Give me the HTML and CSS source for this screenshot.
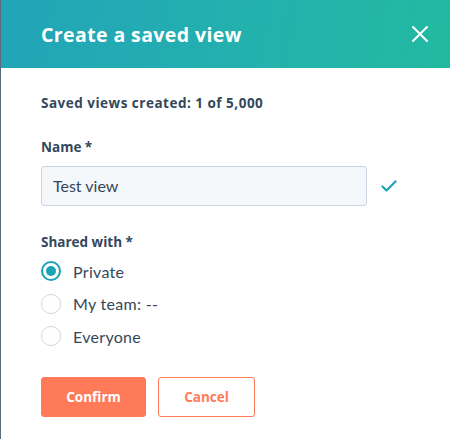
FILE: index.html
```html
<!DOCTYPE html>
<html>
<head>
<meta charset="utf-8">
<link rel="stylesheet" href="styles.css">
</head>
<body>
<div class="dialog">
  <header class="header">
    <h1 class="title">Create a saved view</h1>
    <button class="close" aria-label="Close">
      <svg width="16" height="16" viewBox="0 0 16 16"><path d="M1 1 L15 15 M15 1 L1 15" stroke="#fff" stroke-width="2" stroke-linecap="round" fill="none"/></svg>
    </button>
  </header>
  <div class="content">
    <p class="count">Saved views created: 1 of 5,000</p>
    <label class="label">Name *</label>
    <div class="input-row">
      <div class="input">Test view</div>
      <svg class="check" width="16" height="12" viewBox="0 0 16 12"><path d="M1.5 6.5 L5.5 10.5 L14.5 1.5" stroke="#1aa3b6" stroke-width="2.2" fill="none" stroke-linecap="round" stroke-linejoin="round"/></svg>
    </div>
    <label class="label shared">Shared with *</label>
    <div class="radios">
      <div class="radio-row"><span class="radio checked"></span><span class="radio-label">Private</span></div>
      <div class="radio-row"><span class="radio"></span><span class="radio-label">My team: --</span></div>
      <div class="radio-row"><span class="radio"></span><span class="radio-label">Everyone</span></div>
    </div>
    <div class="actions">
      <button class="btn primary">Confirm</button>
      <button class="btn secondary">Cancel</button>
    </div>
  </div>
</div>
</body>
</html>
```
FILE: styles.css
```css
html, body {
  margin: 0;
  padding: 0;
  background: #fff;
}
body {
  font-family: Lato, "Noto Sans", sans-serif;
  color: #33475b;
}
.dialog {
  width: 450px;
  height: 439px;
  box-sizing: border-box;
  border-left: 1px solid #5a6b7c;
  overflow: hidden;
}
.header {
  height: 68px;
  box-sizing: border-box;
  display: flex;
  align-items: center;
  justify-content: space-between;
  padding: 0 22px 0 40px;
  background: linear-gradient(100deg, #22a4b8 0%, #23b1ae 55%, #22b9a0 100%);
}
.title {
  margin: 0;
  color: #fff;
  font-family: "Open Sans", sans-serif;
  font-size: 19.5px;
  font-weight: 700;
  letter-spacing: 0.4px;
}
.close {
  background: none;
  border: 0;
  padding: 0;
  width: 16px;
  height: 16px;
  display: flex;
  cursor: pointer;
}
.content {
  padding: 25px 40px 0 40px;
}
.count {
  margin: 0;
  font-family: "Open Sans", sans-serif;
  font-size: 13.5px;
  font-weight: 700;
  line-height: 20px;
  letter-spacing: 0.5px;
}
.label {
  display: block;
  font-family: "Open Sans", sans-serif;
  font-size: 13.5px;
  font-weight: 700;
  line-height: 20px;
  margin-top: 24px;
}
.input-row {
  display: flex;
  align-items: center;
  margin-top: 9px;
}
.input {
  width: 326px;
  height: 40px;
  box-sizing: border-box;
  background: #f5f8fa;
  border: 1px solid #cbd6e2;
  border-radius: 3px;
  padding: 0 11px;
  font-size: 16px;
  line-height: 38px;
}
.check {
  margin-left: 14px;
}
.shared {
  margin-top: 26px;
}
.radios {
  display: flex;
  flex-direction: column;
  gap: 12.5px;
  margin-top: 9px;
}
.radio-row {
  display: flex;
  align-items: center;
  height: 20px;
}
.radio {
  width: 20px;
  height: 20px;
  box-sizing: border-box;
  border: 1px solid #cbd6e2;
  border-radius: 50%;
  background: #fff;
  position: relative;
  flex: none;
}
.radio.checked {
  border: 2px solid #1aa3b6;
}
.radio.checked::after {
  content: "";
  position: absolute;
  left: 3px;
  top: 3px;
  width: 10px;
  height: 10px;
  border-radius: 50%;
  background: #1aa3b6;
}
.radio-label {
  margin-left: 12px;
  font-size: 16px;
  letter-spacing: 0.3px;
}
.actions {
  display: flex;
  gap: 12px;
  margin-top: 31px;
}
.btn {
  height: 40px;
  box-sizing: border-box;
  border-radius: 3px;
  font-family: "Open Sans", sans-serif;
  font-size: 13.5px;
  font-weight: 700;
  padding: 0;
}
.primary {
  width: 105px;
  background: #ff7a59;
  border: 1px solid #ff7a59;
  color: #fff;
}
.secondary {
  width: 97px;
  background: #fff;
  border: 1px solid #ff7a59;
  color: #ff7a59;
}
```
